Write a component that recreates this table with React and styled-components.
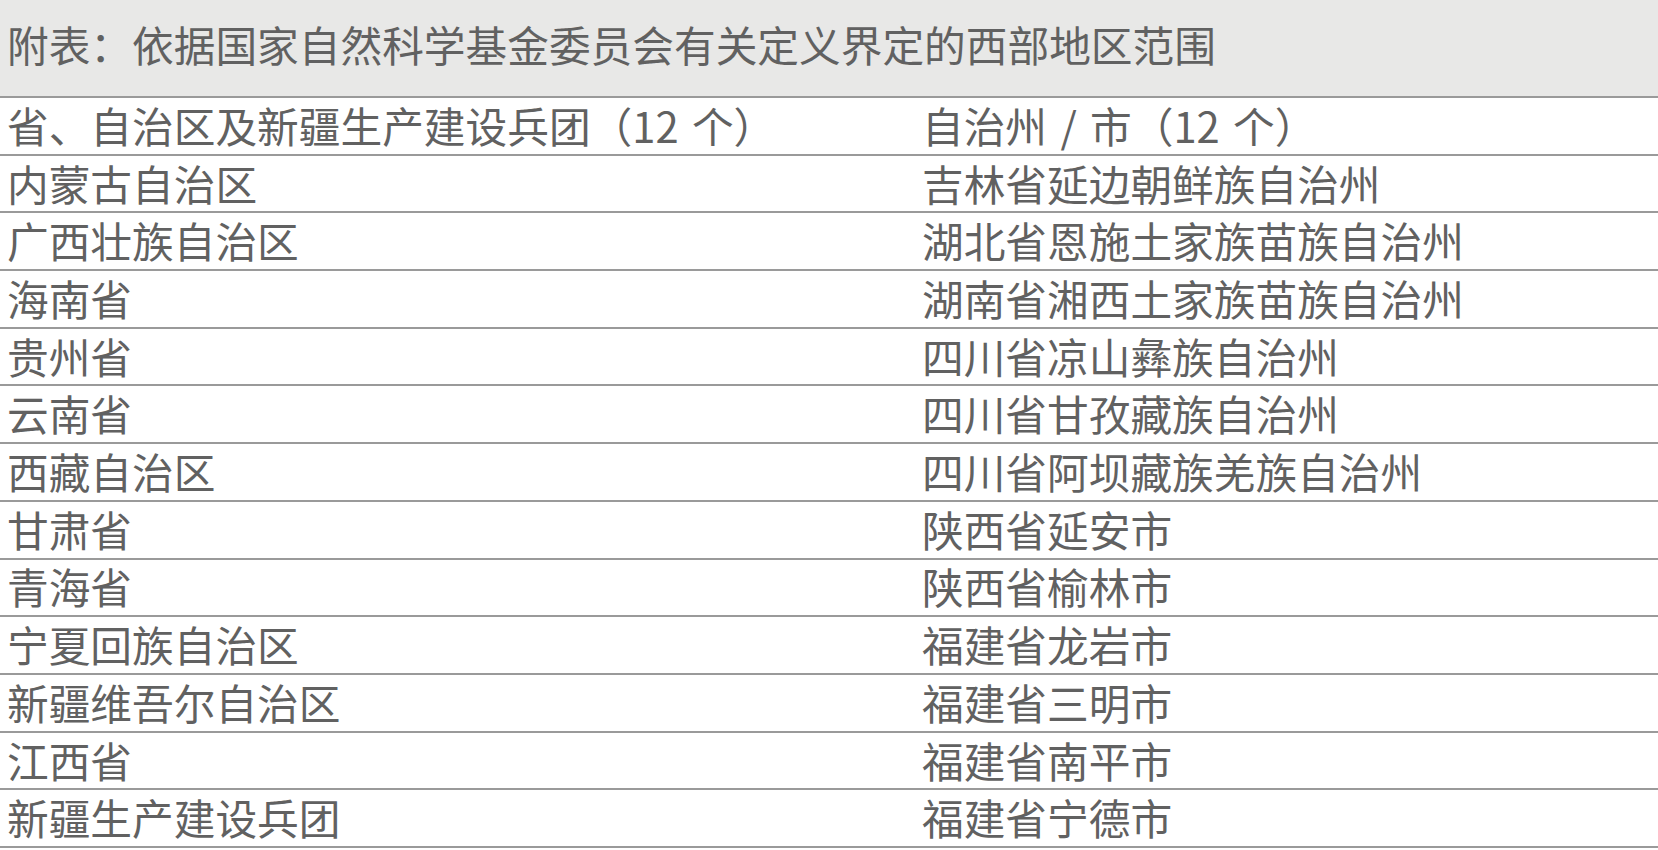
import React from "react";
import styled, { createGlobalStyle } from "styled-components";

const Global = createGlobalStyle`
  html, body { margin: 0; padding: 0; background: #ffffff; }
  body { font-family: "Noto Sans CJK SC", "Noto Sans", sans-serif; }
`;

const Table = styled.div`
  width: 1658px;
  color: #616161;
  font-family: "Noto Sans CJK SC", "Noto Sans", sans-serif;
`;

const Title = styled.div`
  height: 98px;
  box-sizing: border-box;
  background: #e8e8e7;
  border-bottom: 2px solid #9a9a9a;
  display: flex;
  align-items: center;
  padding: 0 0 6px 7px;
  font-size: 41.7px;
  line-height: 1;
  white-space: nowrap;
`;

const Row = styled.div`
  display: grid;
  grid-template-columns: 915px 1fr;
  height: 57.7px;
  box-sizing: border-box;
  border-bottom: 2px solid #9a9a9a;
`;

const Cell = styled.div`
  display: flex;
  align-items: center;
  padding-left: 7px;
  font-size: 41.7px;
  line-height: 1;
  word-spacing: 4px;
  white-space: pre;
`;

const rows = [
  ["省、自治区及新疆生产建设兵团（12 个）", "自治州 / 市（12 个）"],
  ["内蒙古自治区", "吉林省延边朝鲜族自治州"],
  ["广西壮族自治区", "湖北省恩施土家族苗族自治州"],
  ["海南省", "湖南省湘西土家族苗族自治州"],
  ["贵州省", "四川省凉山彝族自治州"],
  ["云南省", "四川省甘孜藏族自治州"],
  ["西藏自治区", "四川省阿坝藏族羌族自治州"],
  ["甘肃省", "陕西省延安市"],
  ["青海省", "陕西省榆林市"],
  ["宁夏回族自治区", "福建省龙岩市"],
  ["新疆维吾尔自治区", "福建省三明市"],
  ["江西省", "福建省南平市"],
  ["新疆生产建设兵团", "福建省宁德市"],
];

export default function App() {
  return (
    <>
      <Global />
      <Table>
        <Title>附表：依据国家自然科学基金委员会有关定义界定的西部地区范围</Title>
        {rows.map(([a, b], i) => (
          <Row key={i}>
            <Cell>{a}</Cell>
            <Cell>{b}</Cell>
          </Row>
        ))}
      </Table>
    </>
  );
}
